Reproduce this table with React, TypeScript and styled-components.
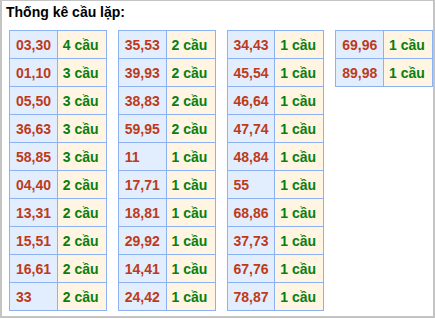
import React from "react";
import styled, { createGlobalStyle } from "styled-components";

const Global = createGlobalStyle`
  html, body { margin: 0; padding: 0; background: #fff; }
  body { font-family: "Liberation Sans", Arial, sans-serif; }
`;

const Panel = styled.div`
  box-sizing: border-box;
  width: 435px;
  height: 318px;
  border: 2px solid #c4c4c4;
  border-top-width: 1px;
  background: #fff;
  padding: 3px 0 0 4px;
`;

const Title = styled.div`
  font-size: 14px;
  font-weight: bold;
  color: #000;
  line-height: 17px;
  height: 26px;
`;

const Tables = styled.div`
  display: flex;
  align-items: flex-start;
  gap: 11px;
  padding-left: 3px;
`;

const Table = styled.table`
  border-collapse: collapse;
  table-layout: fixed;
  width: 98px;
`;

const Cell = styled.td<{ $kind: "pair" | "count" }>`
  border: 1px solid #8db2f4;
  height: 28px;
  padding: 0 0 0 ${(p) => (p.$kind === "pair" ? 6 : 5)}px;
  width: ${(p) => (p.$kind === "pair" ? 47 : 48)}px;
  box-sizing: border-box;
  background: ${(p) => (p.$kind === "pair" ? "#e2eefd" : "#fff5e2")};
  color: ${(p) => (p.$kind === "pair" ? "#bd3b1a" : "#06800f")};
  font-size: 14px;
  font-weight: bold;
  white-space: nowrap;
  vertical-align: middle;
`;

const columns: [string, number][][] = [
  [
    ["03,30", 4], ["01,10", 3], ["05,50", 3], ["36,63", 3], ["58,85", 3],
    ["04,40", 2], ["13,31", 2], ["15,51", 2], ["16,61", 2], ["33", 2],
  ],
  [
    ["35,53", 2], ["39,93", 2], ["38,83", 2], ["59,95", 2], ["11", 1],
    ["17,71", 1], ["18,81", 1], ["29,92", 1], ["14,41", 1], ["24,42", 1],
  ],
  [
    ["34,43", 1], ["45,54", 1], ["46,64", 1], ["47,74", 1], ["48,84", 1],
    ["55", 1], ["68,86", 1], ["37,73", 1], ["67,76", 1], ["78,87", 1],
  ],
  [
    ["69,96", 1], ["89,98", 1],
  ],
];

export default function App() {
  return (
    <>
      <Global />
      <Panel>
        <Title>Thống kê cầu lặp:</Title>
        <Tables>
          {columns.map((rows, i) => (
            <Table key={i}>
              <tbody>
                {rows.map(([pair, n]) => (
                  <tr key={pair}>
                    <Cell $kind="pair">{pair}</Cell>
                    <Cell $kind="count">{n} cầu</Cell>
                  </tr>
                ))}
              </tbody>
            </Table>
          ))}
        </Tables>
      </Panel>
    </>
  );
}
